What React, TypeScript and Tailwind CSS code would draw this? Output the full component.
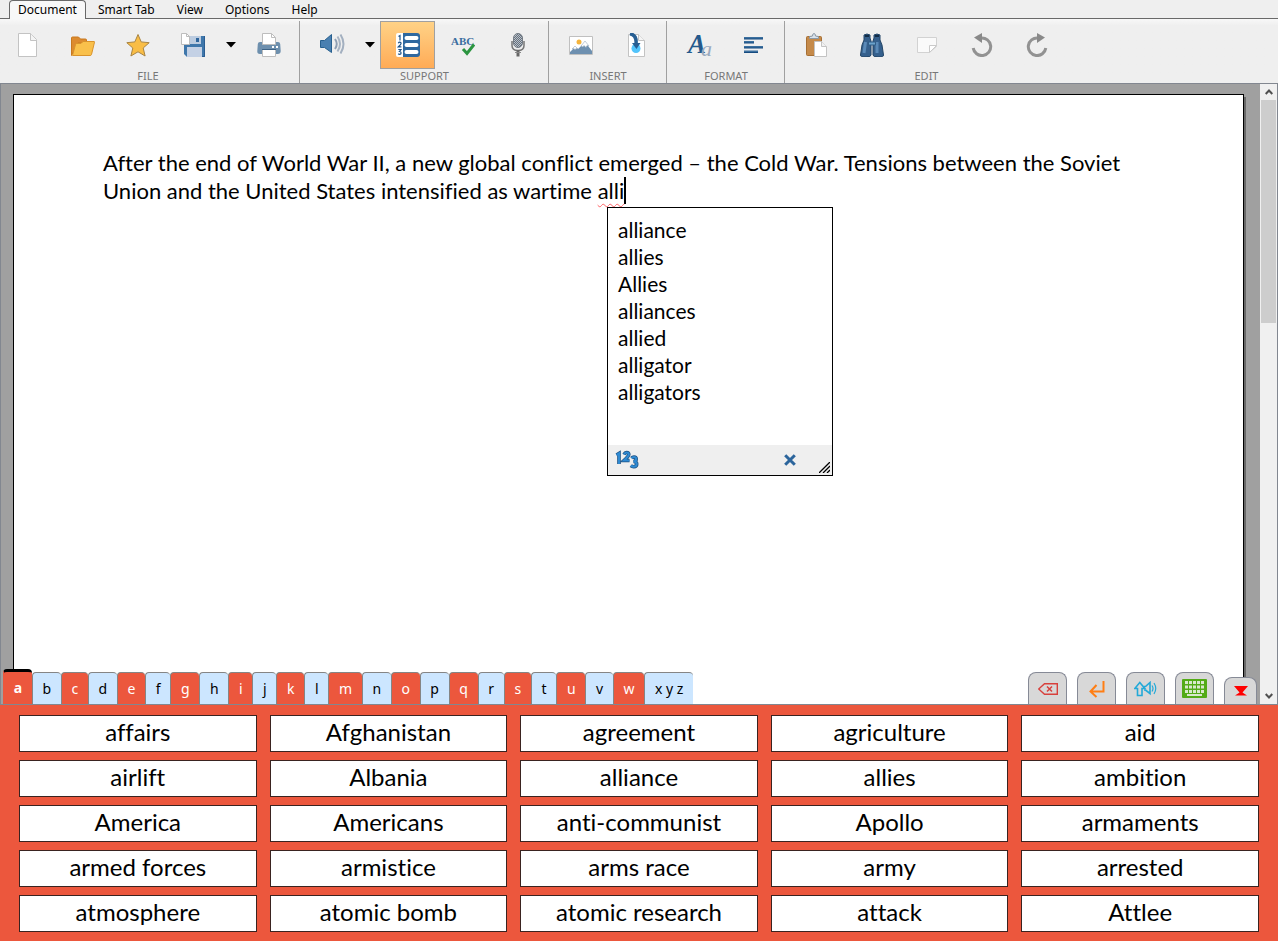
import type { ReactNode } from "react";

const menus = ["Smart Tab", "View", "Options", "Help"];

const suggestions = ["alliance", "allies", "Allies", "alliances", "allied", "alligator", "alligators"];

const letters = ["a", "b", "c", "d", "e", "f", "g", "h", "i", "j", "k", "l", "m", "n", "o", "p", "q", "r", "s", "t", "u", "v", "w", "x y z"];

const words = [
  "affairs", "Afghanistan", "agreement", "agriculture", "aid",
  "airlift", "Albania", "alliance", "allies", "ambition",
  "America", "Americans", "anti-communist", "Apollo", "armaments",
  "armed forces", "armistice", "arms race", "army", "arrested",
  "atmosphere", "atomic bomb", "atomic research", "attack", "Attlee",
];

function Icon({ children }: { children: ReactNode }) {
  return (
    <svg width="24" height="24" viewBox="0 0 24 24" fill="none" aria-hidden="true">
      {children}
    </svg>
  );
}

function NewIcon() {
  return (
    <Icon>
      <path d="M2.500.5h12l6 6v17h-18z" fill="#fff" stroke="#c3c3c3" />
      <path d="M14.500.5v7h6" fill="#f4f4f4" stroke="#c3c3c3" />
    </Icon>
  );
}

function OpenIcon() {
  return (
    <Icon>
      <path d="M.5 22.500V5q0-1 1-1h6l2 2h5q1 0 1 1v3H7z" fill="#dc8b2f" stroke="#c8781f" />
      <path d="M1.500 22.500 4.500 11.500q.4-1 1.500-1h4l2-2h11q.7 0 .5.7L20.500 21.500q-.3 1-1.300 1z" fill="#f9c04b" stroke="#d9932c" />
    </Icon>
  );
}

function StarIcon() {
  return (
    <Icon>
      <path d="m12 1.500 3.200 7.400 8 .8-6 5.300 1.900 8L12 18.800 4.900 23l1.900-8-6-5.300 8-.8z" fill="#f9bd45" stroke="#a88443" />
    </Icon>
  );
}

function SaveIcon() {
  return (
    <Icon>
      <path d="M3 3h21v21H6l-3-3z" fill="#3f77ab" />
      <path d="M9 3h11v8H9z" fill="#bccce0" />
      <path d="M15 5h3v4h-3z" fill="#2f669c" />
      <path d="M6 14h15v10H6z" fill="#c4d1e5" />
      <path d="M23.500 3v20.500H21" stroke="#2a5d92" />
      <path d="M.5.5h5l3 3v8h-8z" fill="#fff" stroke="#bdbdbd" />
      <path d="M5.500.5v3h3" stroke="#bdbdbd" />
    </Icon>
  );
}

function PrintIcon() {
  return (
    <Icon>
      <path d="M3 9h18q2 0 2.200 2l.5 7q0 3-3 3H3q-3 0-2.700-3l.5-7Q1 9 3 9z" fill="#6d8fad" />
      <path d="M5.500.5h9l4 4v7h-13z" fill="#fff" stroke="#bdbdbd" />
      <path d="M14.500.5v4h4" stroke="#bdbdbd" />
      <path d="M5.500 16.500h13v7h-13z" fill="#fff" stroke="#bdbdbd" />
      <path d="M5 16.500h14" stroke="#3d6285" />
      <path d="M15 13h2v2h-2zm4 0h2v2h-2z" fill="#fff" />
    </Icon>
  );
}

function SpeakerIcon() {
  return (
    <svg width="26" height="24" viewBox="0 0 26 24" fill="none" aria-hidden="true">
      <path d="M1.500 7.500h4l7-6v18l-7-5h-4z" fill="#4a80b1" stroke="#28608f" />
      <path d="M16 6q3.500 5 0 10" stroke="#8f9fb3" strokeWidth="2" />
      <path d="M18.500 3.500q5 7.500 0 15" stroke="#a9b5c4" strokeWidth="2" />
      <path d="M21.500 1.500q6 9.500 0 19" stroke="#a3b0c0" strokeWidth="2" />
    </svg>
  );
}

function ListIcon() {
  return (
    <Icon>
      <path d="M2 0h6v24H2q-2 0-2-2V2q0-2 2-2z" fill="#fff" />
      <path d="M7 0h14q3 0 3 3v18q0 3-3 3H7z" fill="#2f689f" />
      <path d="M10.500 5h10M10.500 12h10M10.500 19h10" stroke="#fff" strokeWidth="4" strokeLinecap="round" />
      <g stroke="#1d5287" strokeWidth="1.200">
        <path d="M2.500 3.500 4 2.500v5" />
        <path d="M2.300 10.200q.5-1 1.500-1 1.300 0 1.300 1.200 0 .8-2.700 3.400h3" />
        <path d="M2.300 16.500h2.700L3.500 18.500q1.600 0 1.600 1.400 0 1.400-1.500 1.400-.8 0-1.400-.5" />
      </g>
    </Icon>
  );
}

function SpellIcon() {
  return (
    <Icon>
      <text x="0" y="12" fill="#3a6d9f" fontFamily="Liberation Serif, serif" fontSize="11" fontWeight="700">ABC</text>
      <path d="m12 16 4 4.500 7-9" stroke="#2c9540" strokeWidth="3" />
    </Icon>
  );
}

function MicIcon() {
  return (
    <Icon>
      <defs>
        <pattern id="mesh" width="2" height="2" patternUnits="userSpaceOnUse">
          <path d="M0 0h2v2H0z" fill="#b9c0c8" />
          <path d="M0 0h1v1H0zm1 1h1v1H1z" fill="#66717e" />
        </pattern>
      </defs>
      <rect x="7.500" y=".5" width="9" height="14" rx="4.500" fill="url(#mesh)" stroke="#737b84" />
      <path d="M6 8v4.500q0 5 6 5t6-5V8" stroke="#777" strokeWidth="1.500" />
      <path d="M12 17v6.500" stroke="#666" strokeWidth="3" />
      <path d="M9 19.500h6" stroke="#888" />
    </Icon>
  );
}

function PictureIcon() {
  return (
    <Icon>
      <path d="M.5 3.500h23v18H.5z" fill="#fff" stroke="#c0c0c0" />
      <circle cx="10" cy="9" r="2.500" fill="#f5b43c" />
      <path d="m1 19 5-5 3 2 7-7 7 9v3H1z" fill="#6e90b0" />
      <path d="m3 16 3-3 3 3-2-.5-1 1.500-1-1.500zm9-3 4-5 4 5-2-.5-1 2-2-2-1 1.500z" fill="#fff" stroke="#8b9fb4" strokeWidth=".5" />
    </Icon>
  );
}

function ImportIcon() {
  return (
    <Icon>
      <path d="M4.500 1.500h10l6 6v16h-16z" fill="#fff" stroke="#c3c3c3" />
      <path d="M14.500 1.500v6h6" fill="#f4f4f4" stroke="#c3c3c3" />
      <circle cx="12" cy="15.500" r="4.500" fill="#52c4fb" />
      <path d="M6 .8Q13 2 12 11" stroke="#275f93" strokeWidth="3.500" />
      <path d="M8 10h8.500l-4 6z" fill="#275f93" />
    </Icon>
  );
}

function FontIcon() {
  return (
    <svg className="overflow-visible" width="26" height="26" viewBox="0 0 26 26" aria-hidden="true">
      <text x="2" y="21" fill="#24598c" fontFamily="Liberation Serif, serif" fontSize="27" fontStyle="italic" fontWeight="700">A</text>
      <text x="15" y="24" fill="#9aaabe" fontFamily="Liberation Serif, serif" fontSize="22" fontStyle="italic">a</text>
    </svg>
  );
}

function AlignIcon() {
  return (
    <Icon>
      <path d="M2 5h19M2 9h10M2 14h19M2 18.500h14" stroke="#3b6f9e" strokeWidth="2" />
      <path d="M2 6h19M2 10h10M2 15h19M2 19.500h14" stroke="#154b80" />
    </Icon>
  );
}

function PasteIcon() {
  return (
    <Icon>
      <path d="M2.500 3.500h13q1 0 1 1v18h-14q-1 0-1-1v-17q0-1 1-1z" fill="#c58a4a" stroke="#a66f34" />
      <path d="M4.500 5.500v-2l3-.5q0-2.500 1.500-2.500T10.500 3l3 .5v2z" fill="#d9e3ec" stroke="#8b98a5" />
      <path d="M9.500 8.500h7l5 5v10h-12z" fill="#fff" stroke="#c3c3c3" />
      <path d="M16.500 8.500v5h5" fill="#f1f1f1" stroke="#c3c3c3" />
    </Icon>
  );
}

function FindIcon() {
  return (
    <Icon>
      <path d="M4 2q3-2 6 0v3l1 3v14q0 2-5 2-6 0-5.500-2L2 12l2-5z" fill="#35608d" stroke="#234566" />
      <path d="M20 2q-3-2-6 0v3l-1 3v14q0 2 5 2 6 0 5.500-2L22 12l-2-5z" fill="#35608d" stroke="#234566" />
      <path d="M5.500 9 4 20M17 9v11" stroke="#5a8ab8" strokeWidth="3" />
      <path d="M8.500 9h7v3h-7z" fill="#6ba3cc" stroke="#315d87" />
      <path d="M5 3h4M15 3h4" stroke="#132d47" strokeWidth="2" />
    </Icon>
  );
}

function NoteIcon() {
  return (
    <Icon>
      <path d="M2.500 4.500h19v9l-7 6h-12z" fill="#fafafa" stroke="#d2d2d2" />
      <path d="M14.500 19.500v-7h7z" fill="#fff" stroke="#cacaca" />
    </Icon>
  );
}

function UndoIcon() {
  return (
    <Icon>
      <path d="M11 5a8.800 8.800 0 1 1-7.800 10" stroke="#929292" strokeWidth="3" />
      <path d="M12 0v10L4 4.500z" fill="#898989" />
    </Icon>
  );
}

function RedoIcon() {
  return (
    <Icon>
      <path d="M13 5a8.800 8.800 0 1 0 7.800 10" stroke="#929292" strokeWidth="3" />
      <path d="M12 0v10l8-5.500z" fill="#898989" />
    </Icon>
  );
}

function Group({ title, first, last, children }: { title: string; first?: boolean; last?: boolean; children: ReactNode }) {
  return (
    <div className={`flex flex-col pr-[3px] ${first ? "" : "pl-1"} ${last ? "" : "border-r border-[#a0a0a0]"}`}>
      <div className="flex">{children}</div>
      <div className="text-center text-[11px] leading-3.5 text-[#777777]">{title}</div>
    </div>
  );
}

function Tool({ label, active, children }: { label: string; active?: boolean; children: ReactNode }) {
  return (
    <button
      aria-label={label}
      className={`flex h-12 w-[55px] items-center justify-center border ${
        active ? "border-[#a0a0a0] bg-gradient-to-b from-[#ffd286] to-[#ffab56]" : "border-transparent"
      }`}
    >
      {children}
    </button>
  );
}

function DropArrow({ label }: { label: string }) {
  return (
    <button aria-label={label} className="flex h-12 w-[21px] items-center justify-center">
      <svg width="10" height="6" viewBox="0 0 10 6" aria-hidden="true">
        <path d="M0 0h10L5 5.500z" fill="#000" />
      </svg>
    </button>
  );
}

function SideTab({ label, children }: { label: string; children: ReactNode }) {
  return (
    <button
      aria-label={label}
      className="flex h-8 w-[39px] items-center justify-center rounded-t-lg border border-b-0 border-[#868a96] bg-[#d8d8d8]"
    >
      {children}
    </button>
  );
}

function letterClass(index: number) {
  if (index === 0) return "h-[35px] border-t-[3px] border-t-black border-l-transparent bg-[#ec573d] font-bold text-white";
  if (index % 2 === 0) return "h-8 border-t border-[#858585] bg-[#ec573d] text-white";
  return "h-8 border-t border-[#858585] bg-[#cce6ff] text-black";
}

export default function App() {
  return (
    <div className="flex h-screen flex-col overflow-hidden bg-[#efefef] font-['Noto_Sans',sans-serif] text-black">
      <nav className="flex h-[19px] shrink-0 items-end border-b border-[#696969] text-xs">
        <button className="-mb-px ml-[9px] h-[19px] rounded-t border border-b-0 border-[#696969] bg-[#f8f8f8] px-2 leading-4">Document</button>
        <div className="flex gap-[22px] pl-3">
          {menus.map((menu) => (
            <button key={menu} className="h-4 leading-4">{menu}</button>
          ))}
        </div>
      </nav>

      <header className="flex h-[64px] shrink-0 bg-gradient-to-b from-[#f8f8f8] to-[#efefef] to-10% pt-0.5">
        <Group title="FILE" first>
          <Tool label="New"><NewIcon /></Tool>
          <Tool label="Open"><OpenIcon /></Tool>
          <Tool label="Favourites"><StarIcon /></Tool>
          <Tool label="Save"><SaveIcon /></Tool>
          <DropArrow label="Save options" />
          <Tool label="Print"><PrintIcon /></Tool>
        </Group>
        <Group title="SUPPORT">
          <Tool label="Speak"><SpeakerIcon /></Tool>
          <DropArrow label="Speech options" />
          <Tool label="Word prediction" active><ListIcon /></Tool>
          <Tool label="Spell check"><SpellIcon /></Tool>
          <Tool label="Record"><MicIcon /></Tool>
        </Group>
        <Group title="INSERT">
          <Tool label="Insert picture"><PictureIcon /></Tool>
          <Tool label="Insert file"><ImportIcon /></Tool>
        </Group>
        <Group title="FORMAT">
          <Tool label="Font"><FontIcon /></Tool>
          <Tool label="Paragraph"><AlignIcon /></Tool>
        </Group>
        <Group title="EDIT" last>
          <Tool label="Paste"><PasteIcon /></Tool>
          <Tool label="Find"><FindIcon /></Tool>
          <Tool label="Note"><NoteIcon /></Tool>
          <Tool label="Undo"><UndoIcon /></Tool>
          <Tool label="Redo"><RedoIcon /></Tool>
        </Group>
      </header>

      <main className="relative flex min-h-0 flex-1 overflow-hidden border border-[#828790] bg-[#a0a0a0] font-['Lato',sans-serif] [font-variant-ligatures:none]">
        <div className="relative mt-2.5 mr-4 ml-3 flex-1 border border-b-0 border-black bg-white px-[89px] pt-[54px] shadow-[2px_3px_0_#696969]">
          <p className="text-[22px] leading-7">
            After the end of World War II, a new global conflict emerged – the Cold War. Tensions between the Soviet
            <br />
            Union and the United States intensified as wartime{" "}
            <span className="border-r-2 border-black underline decoration-red-400 decoration-wavy decoration-1 underline-offset-4">alli</span>
          </p>

          <section className="absolute top-28 left-[593px] flex h-[269px] w-[226px] flex-col border border-black bg-white">
            <ul className="flex-1 px-2.5 pt-2 text-[21px] leading-[27px]">
              {suggestions.map((word) => (
                <li key={word}>
                  <button>{word}</button>
                </li>
              ))}
            </ul>
            <footer className="relative flex h-[30px] items-center justify-between bg-[#efefef] pr-9 pl-[7px]">
              <button aria-label="Number shortcuts">
                <svg width="24" height="20" viewBox="0 0 24 20" fill="none" aria-hidden="true">
                  <g stroke="#1d4f80" strokeWidth="3.600">
                    <path d="M1.500 5 4 3.500v10.500" />
                    <path d="M9 4.500q1-2 2.500-2 2.300 0 2.300 2Q13.800 6 9 10.500h5.500" />
                    <path d="M16.500 8.200q1-1.200 2.500-1.200 2.200 0 2.200 2.100T18.500 11.500q3.200 0 3.200 2.600 0 2.600-2.900 2.600-1.800 0-3-1" />
                  </g>
                  <g stroke="#2f8ad2" strokeWidth="2.200">
                    <path d="M1.500 5 4 3.500v10.500" />
                    <path d="M9 4.500q1-2 2.500-2 2.300 0 2.300 2Q13.800 6 9 10.500h5.500" />
                    <path d="M16.500 8.200q1-1.200 2.500-1.200 2.200 0 2.200 2.100T18.500 11.500q3.200 0 3.200 2.600 0 2.600-2.900 2.600-1.800 0-3-1" />
                  </g>
                </svg>
              </button>
              <button aria-label="Close">
                <svg width="12" height="12" viewBox="0 0 12 12" aria-hidden="true">
                  <path d="m1.200 1.200 9.600 9.600m0-9.600-9.600 9.600" stroke="#2c659c" strokeWidth="3" />
                </svg>
              </button>
              <svg className="absolute right-0.5 bottom-0.5" width="11" height="11" viewBox="0 0 11 11" aria-hidden="true">
                <path d="M0 11 11 0M4 11l7-7M8 11l3-3" stroke="#000" strokeWidth="1.300" />
              </svg>
            </footer>
          </section>
        </div>

        <aside className="flex w-[17px] flex-col items-center bg-[#f0f0f0]">
          <button aria-label="Scroll up" className="flex h-4 items-center">
            <svg width="8" height="6" viewBox="0 0 8 6" aria-hidden="true">
              <path d="m.7 5 3.300-3.500L7.300 5" fill="none" stroke="#505050" strokeWidth="2" />
            </svg>
          </button>
          <div className="flex w-full flex-1 flex-col px-px">
            <div className="h-[38%] bg-[#cdcdcd]" />
          </div>
          <button aria-label="Scroll down" className="flex h-4 items-center">
            <svg width="8" height="6" viewBox="0 0 8 6" aria-hidden="true">
              <path d="M.7 1 4 4.500 7.300 1" fill="none" stroke="#505050" strokeWidth="2" />
            </svg>
          </button>
        </aside>

        <div className="absolute bottom-0 left-0.5 flex w-[690px] items-end font-['Noto_Sans',sans-serif] text-sm">
          {letters.map((letter, index) => (
            <button key={letter} className={`grow rounded-t-sm border-l px-[9px] ${letterClass(index)}`}>
              {letter}
            </button>
          ))}
        </div>

        <div className="absolute right-5 bottom-0 flex items-end gap-2.5">
          <SideTab label="Delete">
            <svg width="20" height="12" viewBox="0 0 20 12" fill="none" stroke="#d8403c" aria-hidden="true">
              <path d="M6.500.7h12.800v10.600H6.500L.7 6z" strokeWidth="1.400" />
              <path d="m9 3.500 5 5m0-5-5 5" strokeWidth="1.500" />
            </svg>
          </SideTab>
          <SideTab label="Enter">
            <svg width="16" height="18" viewBox="0 0 16 18" fill="none" stroke="#ff7e14" strokeWidth="2" aria-hidden="true">
              <path d="M14.500 1v10.500H1.500M7.500 5l-6 6.500 6 5.500" />
            </svg>
          </SideTab>
          <SideTab label="Speak">
            <svg width="24" height="16" viewBox="0 0 24 16" fill="none" stroke="#22a9d8" strokeWidth="1.600" aria-hidden="true">
              <path d="M3.500 14.500v-7H.8l5-6 5 6H8v7z" />
              <path d="M9.500 5.500h2l4.500-4v11l-4.500-3.500H10" />
              <path d="M18 4.500q2 3 0 6M20 2q3.500 5.500 0 11" strokeWidth="1.200" />
            </svg>
          </SideTab>
          <SideTab label="Keyboard">
            <svg width="25" height="19" viewBox="0 0 25 19" aria-hidden="true">
              <rect width="25" height="19" rx="1" fill="#53ab17" />
              <path d="M3 3.500h19M3 8h19M3 12.500h19" stroke="#d8e8cc" strokeWidth="3" strokeDasharray="3 1" />
              <path d="M5 16h15" stroke="#d8e8cc" strokeWidth="2" />
            </svg>
          </SideTab>
          <button
            aria-label="Hide grid"
            className="flex h-[27px] w-[33px] items-center justify-center rounded-t-lg border border-b-0 border-[#868a96] bg-[#d8d8d8]"
          >
            <svg width="14" height="10" viewBox="0 0 14 10" aria-hidden="true">
              <path d="M0 0h14L8.500 6.500 13 9.500H1l4.500-3z" fill="#f00" />
            </svg>
          </button>
        </div>
      </main>

      <section className="grid shrink-0 grid-cols-5 gap-x-[13px] gap-y-2 bg-[#ec573d] px-[19px] pt-2.5 pb-[9px] font-['Lato',sans-serif] text-2xl [font-variant-ligatures:none]">
        {words.map((word) => (
          <button key={word} className="h-[37px] border border-[#3a2320] bg-white pb-1 leading-8">
            {word}
          </button>
        ))}
      </section>
    </div>
  );
}
